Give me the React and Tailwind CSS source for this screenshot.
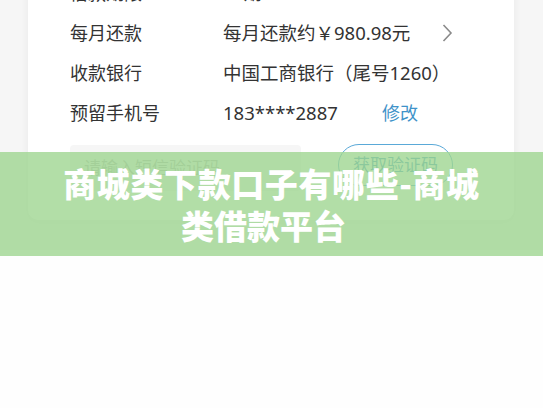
export default function App() {
  const font = { fontFamily: '"Noto Sans", "Noto Sans CJK SC", sans-serif' };
  const cjk = { fontFamily: '"Noto Sans CJK SC", "Noto Sans", sans-serif' };
  return (
    <div className="relative w-[543px] h-[408px] overflow-hidden bg-[#fefefe]" style={font}>
      <div className="h-[250px] bg-[#f6f6f6] px-[28px] pt-px">
        <div className="-mt-[28px] w-[486px] rounded-[10px] bg-white shadow-[0_2px_8px_rgba(0,0,0,0.06)] pl-[42px] pr-[40px] pb-[35px]">
          <div className="flex h-[40px] items-center text-[18px] text-[#333]">
            <div className="w-[153px]">借款期限</div>
            <div>12期</div>
          </div>
          <div className="flex h-[40px] items-center text-[18px] text-[#333]">
            <div className="w-[153px]">每月还款</div>
            <div className="flex-1 text-[18.5px]">每月还款约￥980.98元</div>
            <svg width="12" height="20" viewBox="0 0 12 20" className="mr-[21px]">
              <path d="M2.5 2 L10 10 L2.5 18" fill="none" stroke="#8a8a8a" strokeWidth="1.6" />
            </svg>
          </div>
          <div className="flex h-[40px] items-center text-[18px] text-[#333]">
            <div className="w-[153px]">收款银行</div>
            <div className="text-[18.5px]">中国工商银行（尾号1260）</div>
          </div>
          <div className="flex h-[40px] items-center text-[18px] text-[#333]">
            <div className="w-[153px]">预留手机号</div>
            <div className="w-[159px] text-[18.5px]">183****2887</div>
            <div className="text-[#3f93c9]">修改</div>
          </div>
          <div className="mt-[12px] flex h-[40px] items-center">
            <div className="flex h-[46px] w-[231px] items-center self-start rounded-[4px] bg-[#f6f6f6] pl-[14px] text-[17px] text-[#b5b5b5]">
              请输入短信验证码
            </div>
            <div className="ml-[37px] flex h-[42px] w-[115px] items-center justify-center rounded-full border-[1.5px] border-[#5aa9d8] text-[17px] text-[#3f93c9]">
              获取验证码
            </div>
          </div>
        </div>
      </div>
      <div className="absolute left-0 top-[152px] flex h-[104px] w-full items-center justify-center bg-[rgba(159,214,145,0.8)]">
        <div className="text-center text-[33px] font-black leading-[42px] text-white" style={cjk}>
          <span className="tracking-[0.6px]">商城类下款口子有哪些-商城</span>
          <br />
          <span className="inline-block pr-[16px]">类借款平台</span>
        </div>
      </div>
    </div>
  );
}
